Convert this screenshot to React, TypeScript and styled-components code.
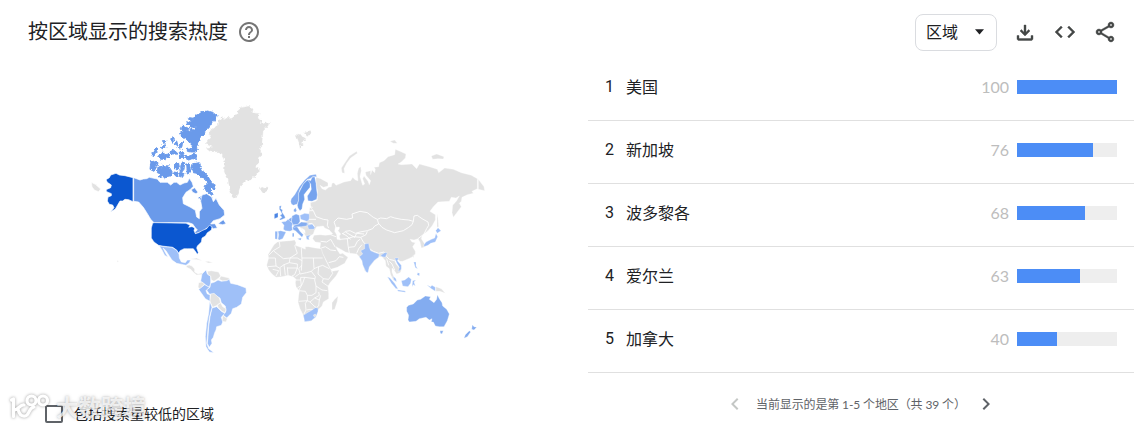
import React from "react";
import styled, { createGlobalStyle } from "styled-components";

const GlobalStyle = createGlobalStyle`
  * {
    box-sizing: border-box;
  }
  body {
    margin: 0;
    background-color: #fff;
    color: #202124;
    font-family: Lato, "Noto Sans CJK SC", sans-serif;
  }
`;

const Widget = styled.div`
  width: 1141px;
  height: 430px;
  overflow: hidden;
`;
const Header = styled.header`
  display: flex;
  align-items: center;
  height: 58px;
  padding: 6px 24px 0 28px;
`;
const Title = styled.h1`
  margin: 0;
  font-size: 20px;
  font-weight: 400;
  line-height: 28px;
  padding-bottom: 2px;
`;
const HelpIcon = styled.svg`
  width: 24px;
  height: 24px;
  margin-left: 9px;
  fill: #757575;
`;
const Actions = styled.div`
  display: flex;
  align-items: center;
  gap: 16px;
  margin-left: auto;
`;
const Select = styled.button`
  display: flex;
  align-items: center;
  justify-content: space-between;
  width: 82px;
  height: 37px;
  padding: 0 11px 2px 10px;
  border: 1px solid #dadce0;
  border-radius: 8px;
  background-color: #fff;
  color: #202124;
  font-family: inherit;
  font-size: 16px;
`;
const Caret = styled.svg`
  width: 11px;
  height: 6px;
  margin-top: 1px;
  fill: #202124;
`;
const ActionIcon = styled.svg`
  width: 24px;
  height: 24px;
  fill: #444746;
  stroke: #444746;
  stroke-width: 0.4;
`;
const Body = styled.main`
  display: flex;
  height: 372px;
`;
const MapColumn = styled.section`
  display: flex;
  flex-direction: column;
  width: 588px;
  padding-top: 37px;
`;
const WorldMap = styled.svg`
  width: 420px;
  height: 265px;
  margin-left: 80px;
  flex-shrink: 0;
`;
const LowVolume = styled.label`
  position: relative;
  display: flex;
  align-items: center;
  gap: 11px;
  height: 24px;
  margin: 41px 0 0 45px;
  font-size: 14px;
`;
const Checkbox = styled.span`
  width: 18px;
  height: 18px;
  margin-top: 2px;
  border: 2px solid #5f6368;
  border-radius: 2px;
`;
const Watermark = styled.div`
  position: absolute;
  left: -38px;
  top: -9px;
  display: flex;
  align-items: center;
  color: rgba(255, 255, 255, 0.75);
  font-size: 22.5px;
  font-weight: 700;
  line-height: 32px;
  text-shadow: 0 0 2px rgba(0, 0, 0, 0.22), 0 0 4px rgba(0, 0, 0, 0.16);
`;
const WatermarkLogo = styled.svg`
  width: 44px;
  height: 32px;
  margin-right: 5px;
  fill: none;
  stroke: #fff;
  stroke-width: 3.2;
  stroke-linecap: round;
  stroke-linejoin: round;
  filter: drop-shadow(0 0 1.5px rgba(0, 0, 0, 0.38));
`;
const ListColumn = styled.section`
  width: 546px;
`;
const Row = styled.div`
  display: flex;
  align-items: center;
  height: 63px;
  padding: 0 17px 5px 17px;
  border-bottom: 1px solid #e0e0e0;
  font-size: 16px;
`;
const Rank = styled.span`
  width: 21px;
  font-family: Roboto, sans-serif;
`;
const Region = styled.span`
  flex: 1;
  padding-bottom: 2px;
`;
const Value = styled.span`
  margin-right: 8px;
  color: #bdbdbd;
  font-size: 16px;
`;
const Track = styled.div`
  width: 100px;
  height: 14px;
  background-color: #eee;
`;
const Bar = styled.div`
  height: 100%;
  background-color: #4c8df6;
`;
const Pager = styled.div`
  display: flex;
  align-items: center;
  height: 61px;
  padding-left: 135px;
  color: #5f6368;
  font-size: 12px;
`;
const PagerText = styled.span`
  width: 207px;
  margin: 0 11px 0 9px;
  letter-spacing: -0.12px;
  white-space: nowrap;
`;
const Chevron = styled.svg<{ disabled?: boolean }>`
  width: 24px;
  height: 24px;
  fill: ${(props) => (props.disabled ? "#c4c7c5" : "#5f6368")};
`;

const regions = [
  { name: "美国", value: 100 },
  { name: "新加坡", value: 76 },
  { name: "波多黎各", value: 68 },
  { name: "爱尔兰", value: 63 },
  { name: "加拿大", value: 40 },
];

const grey = "#e2e2e2";
const us = "#0b57d0";
const canada = "#6a9aea";
const mid = "#83acf0";
const light = "#9fc0f8";

interface IShape {
  fill: string;
  d: string;
}

const arctic: IShape[] = [
  { fill: canada, d: "M156 34L170 28L190 21L206 25L219 36L216 46L204 58L196 70L186 80L178 92L170 102L164 120L158 134L150 138L142 136L146 126L138 118L132 110L124 104L112 96L110 86L118 84L112 74L116 66L128 70L132 80L142 84L136 72L150 78L160 72L146 70L132 62L128 56L142 52L136 44L150 46Z" },
  { fill: canada, d: "M128 154L142 157L152 148L161 156L159 166L144 164L134 168L122 162ZM108 146L116 140L120 150L110 154ZM106 156L118 154L120 163L108 163ZM130 132L142 138L160 136L158 144L144 144L130 142Z" },
  { fill: canada, d: "M144 180L156 178L166 176L170 190L178 206L190 214L198 228L212 244L216 258L210 260L204 250L198 252L204 266L210 272L206 276L194 266L182 256L184 246L192 238L184 228L172 220L160 208L148 206Z" },
  { fill: canada, d: "M42 192L56 190L58 182L66 190L72 184L80 196L88 210L84 216L74 216L68 222L56 218L46 222L50 210L40 206Z" },
  { fill: canada, d: "M20 178L22 170L42 176L40 184L30 202L18 196Z" },
  { fill: canada, d: "M24 154L36 134L42 136L36 148L28 158ZM44 158L58 144L62 152L76 150L78 158L62 167L48 164ZM52 128L64 122L66 130L54 138ZM80 108L88 98L92 112L86 118ZM92 118L98 114L102 128L94 124ZM106 126L116 112L114 130L108 136ZM80 142L90 138L92 148L84 152ZM58 110L66 110L64 118L56 116ZM96 142L102 146L98 154L92 150Z" },
  { fill: canada, d: "M94 180L104 178L106 192L98 198L92 190ZM112 178L122 176L120 196L112 206L110 190ZM128 180L136 180L140 204L130 210ZM90 204L100 206L104 214L92 216ZM110 206L120 208L116 220L108 216ZM168 280L182 276L190 288L180 290L170 290Z" },
];

const greenland: IShape[] = [
  { fill: grey, d: "M108 300L100 294L92 270L88 240L76 218L78 190L70 168L56 158L34 158L24 150L42 144L22 136L26 126L36 116L30 106L38 92L58 80L60 64L70 56L80 62L90 54L98 62L106 48L118 46L116 36L128 26L150 22L162 30L160 42L184 44L176 56L190 64L186 76L214 70L204 84L192 96L190 120L188 140L182 152L190 168L180 176L182 192L168 204L182 212L174 226L158 240L140 246L124 264L118 282L112 296Z" },
  { fill: grey, d: "M184 268L190 265L196 268L206 264L208 272L196 281L186 279L190 274Z" },
  { fill: grey, d: "M292 110L304 106L312 116L322 124L310 128L312 140L304 150L300 130ZM316 102L334 98L338 106L324 112Z" },
];

const northAmerica: IShape[] = [
  { fill: grey, d: "M34 262L46 268L62 282L56 290L44 286L36 276Z" },
  { fill: us, d: "M78 254L88 248L92 240L108 235L118 240L135 242L159 248L159 320L146 314L135 313L128 318L120 318L114 328L106 342L92 350L102 338L98 330L88 328L82 318L84 306L94 302L94 296L80 290L78 284L92 278L94 270L82 262Z" },
  { fill: canada, d: "M161 248L180 255L190 252L200 251L208 247L232 252L240 262L262 262L272 270L282 262L290 262L300 270L312 264L322 262L328 250L336 262L340 274L330 284L318 292L308 308L310 326L330 336L346 346L350 366L358 371L358 350L366 340L362 318L366 300L380 296L395 306L400 320L408 310L418 330L432 346L434 360L420 371L400 377L392 387L405 386L412 399L400 401L392 395L380 399L372 407L350 415L342 413L352 405L345 397L338 387L326 383L222 383L212 373L204 359L190 337L176 321L161 319ZM414 386L430 374L438 386L428 389Z" },
  { fill: canada, d: "M334 284L344 278L354 292L348 296L338 292Z" },
];

const americas: IShape[] = [
  { fill: us, d: "M218 70L222 68L318 70L330 76L326 82L336 80L344 84L342 92L346 101L356 98L366 92L380 86L388 76L396 80L394 90L382 98L376 108L366 114L364 126L352 138L350 144L355 158L352 163L346 154L340 146L322 146L312 146L300 152L296 160L290 150L278 142L262 140L246 138L236 136L222 126L214 114L214 84Z" },
  { fill: light, d: "M238 138L246 139L262 141L276 142L290 151L297 162L298 174L304 186L316 188L322 180L332 180L328 188L318 196L310 194L290 190L276 180L268 168L258 152L249 144L256 158L264 172L254 166L246 150Z" },
  { fill: grey, d: "M318 197L328 195L336 198L344 207L344 216L354 222L364 219L370 224L360 224L350 225L340 217L332 208L320 202ZM330 177L350 174L368 182L352 179ZM374 184L386 184L400 188L384 189ZM111 181L117 184L112 187Z" },
  { fill: light, d: "M366 222L378 210L382 222L392 228L392 250L388 262L378 256L362 244Z" },
  { fill: grey, d: "M382 214L394 212L416 216L422 228L414 236L402 244L394 240L392 228L384 224ZM422 228L448 234L446 242L428 243L418 238ZM356 248L366 246L374 252L360 266L354 262Z" },
  { fill: light, d: "M374 254L388 262L378 272L382 282L390 284L390 304L376 296L366 282L356 268L362 264Z" },
  { fill: light, d: "M392 250L404 246L414 240L424 244L440 242L448 238L452 250L472 254L498 264L499 278L488 292L484 312L470 322L458 326L454 340L440 354L428 344L438 334L436 318L424 308L420 294L400 284L388 282L380 270L390 262Z" },
  { fill: grey, d: "M392 282L402 280L418 294L422 308L412 316L398 322L390 304ZM412 314L422 308L428 320L438 326L436 338L426 334L414 322ZM428 346L442 356L438 366L426 364Z" },
  { fill: light, d: "M396 324L410 320L424 334L434 340L424 352L428 366L424 376L410 380L408 390L404 398L400 412L394 420L396 430L388 442L382 430L384 410L386 380L390 350Z" },
  { fill: light, d: "M389 304L396 322L388 352L384 384L382 410L380 430L386 446L402 458L388 456L378 440L376 410L380 370L386 340Z" },
];

const eurasia: IShape[] = [
  { fill: grey, d: "M168 112L182 116L204 128L204 138L190 142L180 136L186 146L196 150L206 142L214 140L216 130L222 128L228 136L252 126L272 122L278 112L286 120L294 122L292 100L296 84L302 80L304 92L300 110L308 136L314 132L308 116L312 108L324 124L328 134L332 122L318 106L316 96L332 92L332 104L336 90L344 98L346 88L342 82L356 80L358 68L372 62L384 50L404 44L406 28L420 34L438 42L436 54L424 66L414 72L424 74L456 72L470 86L478 72L508 80L532 88L536 98L554 84L580 88L604 98L634 106L652 116L652 146L636 154L640 160L622 164L606 172L604 184L598 190L604 200L592 216L580 232L576 218L578 196L590 182L598 168L588 174L574 172L568 184L534 186L520 200L510 214L526 224L526 240L516 258L504 272L492 282L486 288L484 296L494 312L492 322L484 324L480 306L474 296L462 300L450 298L456 306L466 308L458 320L466 334L466 342L458 350L446 356L428 364L420 364L416 360L404 362L408 372L418 384L424 392L420 398L410 402L402 390L396 384L396 396L402 412L406 424L400 420L392 404L388 386L378 378L376 362L366 350L358 350L342 364L326 384L322 394L314 392L306 362L298 350L290 342L270 340L256 336L246 330L228 320L232 330L240 342L248 340L264 352L254 370L232 382L212 388L196 356L186 338L182 326L180 322L182 308L166 306L158 296L162 286L180 284L196 286L212 284L218 281L208 270L194 264L190 258L170 260L164 270L160 282L150 288L146 296L138 290L128 272L120 262L116 250L140 244L146 224L150 200L150 188L166 184L172 180L172 150L168 130Z" },
  { fill: grey, d: "M655 118L672 140L674 152L664 150L655 148ZM246 98L244 84L256 66L268 48L290 34L292 40L272 54L260 70L252 86L254 100ZM390 4L404 0L412 10L400 10ZM514 48L530 42L552 50L550 57L534 56L518 58ZM531 222L534 236L536 260L531 262Z" },
  { fill: "#fff", d: "M226 262L238 261L238 266L234 272L242 282L238 288L241 300L231 298L230 284L224 274Z" },
  { fill: mid, d: "M92 184L94 176L104 164L118 140L134 120L150 106L168 103L170 110L158 110L150 116L142 118L130 132L120 148L116 160L116 180L112 192L100 196L94 192Z" },
  { fill: "#6f9feb", d: "M112 196L116 180L116 160L122 148L130 132L142 120L150 126L150 142L140 154L132 164L134 178L128 192L126 206L120 212L114 204Z" },
  { fill: "#76a3ee", d: "M142 118L152 122L156 112L164 110L168 130L170 150L172 164L170 178L156 184L144 182L142 168L150 156L154 148L152 132Z" },
  { fill: mid, d: "M101 209L107 203L110 212L106 217L101 214Z" },
  { fill: "#6f9feb", d: "M58 198L64 197L62 206L68 210L66 216L74 228L76 234L62 240L58 238L66 232L60 226L66 222L62 214L58 208Z" },
  { fill: "#4a84e4", d: "M43 222L54 218L54 232L43 236Z" },
  { fill: mid, d: "M96 228L108 222L118 226L120 244L114 254L98 254L94 242ZM86 238L96 231L94 246L86 243Z" },
  { fill: light, d: "M120 226L134 220L148 222L148 240L140 244L122 238Z" },
  { fill: "#92b7f5", d: "M64 246L78 244L84 238L98 250L96 260L98 270L90 274L76 272L70 268L72 256Z" },
  { fill: "#92b7f5", d: "M54 274L62 272L78 276L74 284L68 296L58 300L54 298L56 284ZM45 274L53 274L52 298L45 297Z" },
  { fill: mid, d: "M98 262L110 258L114 264L120 274L130 284L126 292L120 286L106 272L100 270ZM112 296L124 294L122 301ZM97 280L102 279L102 290L97 290Z" },
  { fill: mid, d: "M99 257L116 252L124 246L144 248L148 252L138 258L124 260L112 260L102 262Z" },
  { fill: light, d: "M142 256L158 252L164 262L162 268L146 268Z" },
  { fill: "#fff", d: "M124 264L134 270L136 280L130 276Z" },
  { fill: light, d: "M138 288L152 284L146 292L148 300L140 298Z" },
  { fill: light, d: "M498 306L514 298L524 294L528 280L533 290L526 306L512 310L504 316L492 320L492 314ZM527 272L534 263L543 272L532 280Z" },
];

const south: IShape[] = [
  { fill: grey, d: "M42 44L52 36L68 34L90 32L104 30L108 38L106 46L122 52L136 58L136 50L146 50L166 54L184 56L188 70L198 92L208 112L216 124L238 120L228 138L212 156L204 168L206 190L206 206L190 216L186 228L176 238L168 260L152 274L134 274L130 256L120 236L114 216L116 196L118 184L108 170L106 158L108 148L100 140L84 136L66 140L48 142L36 132L26 120L20 106L26 84L24 74L36 54Z" },
  { fill: light, d: "M130 256L136 252L142 248L156 240L166 233L174 234L174 244L168 260L154 272L134 275Z" },
  { fill: grey, d: "M160 255L166 252L169 257L163 261ZM216 218L224 208L234 198L232 214L224 238L216 240Z" },
  { fill: light, d: "M314 42L326 40L328 52L332 62L346 68L358 72L356 82L344 90L328 110L324 128L318 126L308 104L306 92L298 80L308 72L302 62L314 56ZM362 76L374 68L382 68L376 82L366 80Z" },
  { fill: light, d: "M382 140L390 144L404 160L414 176L408 176L394 160ZM412 179L436 183L436 187L414 184ZM399 138L408 146L410 156L402 150ZM424 152L434 150L446 141L454 148L452 160L444 170L428 168ZM458 152L468 150L462 156L466 168L460 164L456 170Z" },
  { fill: light, d: "M461 96L468 96L468 108L473 116L466 113ZM473 128L479 130L478 138L471 134ZM404 84L416 84L412 92L424 106L424 118L414 126L418 112L410 98ZM500 164L512 170L516 166L526 172L526 184L514 176Z" },
  { fill: grey, d: "M528 170L544 176L556 190L540 184L528 184ZM458 78L462 74L460 84Z" },
  { fill: mid, d: "M440 232L446 226L460 222L472 210L482 208L496 198L512 200L508 208L522 218L530 208L532 194L538 206L546 218L548 228L560 238L568 252L562 272L552 290L538 290L526 288L520 276L514 276L516 266L508 270L498 262L478 266L468 274L448 276L444 270L446 256L440 244ZM540 302L550 302L546 312L541 310ZM637 284L642 290L650 292L642 300L635 298ZM628 302L632 306L622 320L612 325L616 314Z" },
];

const asiaBorders =
  "M228 262L222 246L234 234L260 238L278 234L276 222L300 214L322 218L340 232L352 238L356 252L344 258L338 266L322 272L300 276L286 280L270 272L256 274L248 282M352 238L362 234L380 236L392 230L404 234L424 238L446 240L460 244L456 254L446 262L430 272L404 278L380 270L366 262L356 250M460 244L462 228L472 226L486 236L504 246L506 256L500 266L492 282L474 296M322 274L318 284L302 292L310 306L316 312M328 326L340 334L356 340L372 336L380 350L388 358L404 362M240 298L262 296L264 316L268 340M262 296L280 290L302 292M266 322L284 320L292 304L300 298M290 340L296 326L306 314M246 280L258 286L272 298M256 276L270 284L284 292L290 280L312 282M182 304L200 306L212 298L218 308L226 322M184 324L196 320L212 330L228 332M212 284L222 288L228 290M206 368L228 362L238 350L250 352M150 188L152 204L160 212L168 230L190 238L204 240L202 256L206 264M146 238L168 238M148 212L160 212M148 200L158 202M140 252L156 250L164 260M388 364L396 372L404 390M380 356L386 376";

const africaBorders =
  "M58 36L60 50L40 62L26 76M40 62L70 86L90 84L112 70L104 46M124 54L126 92L124 122M126 84L188 84M126 92L112 84L90 84L88 98L112 102L112 116M26 84L46 84L48 108L24 110M48 108L58 114L72 104L88 98M60 114L62 138M38 118L56 122L48 138M72 104L76 136M82 112L84 136M82 114L112 114L104 134L96 138M126 106L116 116L120 130L106 140M160 84L162 116L154 124L140 128L120 132M162 116L176 110L188 106L208 116M176 110L174 132L190 146L206 148M206 148L218 130L214 122M154 124L166 140L164 150L168 168M108 150L122 150L122 142L134 142L164 146M122 150L124 166L112 174M134 142L128 160L116 182L136 184L142 196L156 196L168 188L168 168L186 180L202 182M190 146L186 156L206 170M142 196L142 212L116 214M142 212L150 216L164 204L178 196L176 186M142 212L136 220L138 240L132 252M150 216L162 228L168 232M164 204L178 210L176 228L170 232M178 210L182 196M140 240L150 238L158 238";

const drawShapes = (shapes: IShape[]) =>
  shapes.map((shape, index) => <path key={index} fill={shape.fill} d={shape.d} />);

const GeoMap = () => (
  <WorldMap viewBox="0 0 1260 795">
    <defs>
      <filter id="coast" x="-5%" y="-5%" width="110%" height="110%">
        <feTurbulence type="fractalNoise" baseFrequency="0.11" numOctaves="2" seed="4" />
        <feDisplacementMap
          in="SourceGraphic"
          scale="16"
          xChannelSelector="R"
          yChannelSelector="G"
          colorInterpolationFilters="sRGB"
        />
      </filter>
    </defs>
    <g stroke="#fff" strokeWidth="1" strokeLinejoin="round">
      <g stroke={canada} strokeWidth="3" transform="translate(195 30)" filter="url(#coast)">
        {drawShapes(arctic)}
      </g>
      <g stroke={grey} transform="translate(360 15)" filter="url(#coast)">
        {drawShapes(greenland)}
      </g>
      <g strokeWidth="2">{drawShapes(northAmerica)}</g>
      <g strokeWidth="1.6" transform="translate(0 315)">{drawShapes(americas)}</g>
      <g transform="translate(540 135)">
        {drawShapes(eurasia)}
        <path fill="none" strokeWidth="2.6" d={asiaBorders} />
      </g>
      <g transform="translate(540 405)">
        {drawShapes(south)}
        <path fill="none" strokeWidth="2.4" d={africaBorders} />
      </g>
    </g>
  </WorldMap>
);

const App = () => {
  return (
    <>
      <GlobalStyle />
      <Widget>
        <Header>
          <Title>按区域显示的搜索热度</Title>
          <HelpIcon viewBox="0 0 24 24">
            <path d="M11 18h2v-2h-2v2zm1-16C6.48 2 2 6.48 2 12s4.48 10 10 10 10-4.48 10-10S17.52 2 12 2zm0 18c-4.41 0-8-3.59-8-8s3.59-8 8-8 8 3.59 8 8-3.59 8-8 8zm0-14c-2.21 0-4 1.79-4 4h2c0-1.1.9-2 2-2s2 .9 2 2c0 2-3 1.75-3 5h2c0-2.25 3-2.5 3-5 0-2.21-1.79-4-4-4z" />
          </HelpIcon>
          <Actions>
            <Select>
              区域
              <Caret viewBox="0 0 11 6">
                <path d="M1 .3h9L5.500 5.500z" />
              </Caret>
            </Select>
            <ActionIcon viewBox="0 0 24 24">
              <path d="M12 16l-5-5 1.4-1.45 2.6 2.6V5h2v7.15l2.6-2.6L17 11l-5 5zm-6 4.500c-.55 0-1.02-.2-1.41-.59C4.200 19.520 4 19.050 4 18.500v-3h2v3h12v-3h2v3c0 .55-.2 1.02-.59 1.41-.39.39-.86.59-1.41.59H6z" />
            </ActionIcon>
            <ActionIcon viewBox="0 0 24 24">
              <path d="M9.4 16.6L4.8 12l4.6-4.6L8 6l-6 6 6 6 1.4-1.4zm5.2 0l4.6-4.6-4.6-4.6L16 6l6 6-6 6-1.4-1.4z" />
            </ActionIcon>
            <ActionIcon viewBox="0 0 24 24">
              <path d="M18 16.1c-.8 0-1.4.3-2 .8l-7.1-4.2c.1-.2.1-.5.1-.7s0-.5-.1-.7L16 7.2c.5.5 1.2.8 2 .8 1.7 0 3-1.3 3-3s-1.3-3-3-3-3 1.3-3 3c0 .2 0 .5.1.7L8 9.8C7.500 9.300 6.800 9 6 9c-1.700 0-3 1.300-3 3s1.300 3 3 3c.8 0 1.500-.3 2-.8l7.100 4.200c-.1.200-.1.400-.1.600 0 1.600 1.300 2.900 3 2.900s2.900-1.300 2.900-2.900-1.300-2.900-2.900-2.900zM18 4c.6 0 1 .4 1 1s-.4 1-1 1-1-.4-1-1 .4-1 1-1zM6 13c-.6 0-1-.4-1-1s.4-1 1-1 1 .4 1 1-.4 1-1 1zm12 7c-.6 0-1-.4-1-1s.4-1 1-1 1 .4 1 1-.4 1-1 1z" />
            </ActionIcon>
          </Actions>
        </Header>
        <Body>
          <MapColumn>
            <GeoMap />
            <LowVolume>
              <Checkbox />
              包括搜索量较低的区域
              <Watermark>
                <WatermarkLogo viewBox="0 0 44 32">
                  <path d="M4.500 8L6.500 7V24.500M17 13C13 12.500 12 17 7.500 18M11 17C12 22 14 24.500 18 24C23 23 21 16 27 15" />
                  <circle cx="24.500" cy="8.500" r="4.500" />
                  <circle cx="36" cy="8.500" r="4.500" />
                </WatermarkLogo>
                大数跨境
              </Watermark>
            </LowVolume>
          </MapColumn>
          <ListColumn>
            {regions.map((region, index) => (
              <Row key={region.name}>
                <Rank>{index + 1}</Rank>
                <Region>{region.name}</Region>
                <Value>{region.value}</Value>
                <Track>
                  <Bar style={{ width: `${region.value}%` }} />
                </Track>
              </Row>
            ))}
            <Pager>
              <Chevron disabled viewBox="0 0 24 24">
                <path d="M15.410 7.410L14 6l-6 6 6 6 1.410-1.410L10.830 12z" />
              </Chevron>
              <PagerText>当前显示的是第 1-5 个地区（共 39 个）</PagerText>
              <Chevron viewBox="0 0 24 24">
                <path d="M10 6L8.590 7.410 13.170 12l-4.580 4.590L10 18l6-6z" />
              </Chevron>
            </Pager>
          </ListColumn>
        </Body>
      </Widget>
    </>
  );
};

export default App;
